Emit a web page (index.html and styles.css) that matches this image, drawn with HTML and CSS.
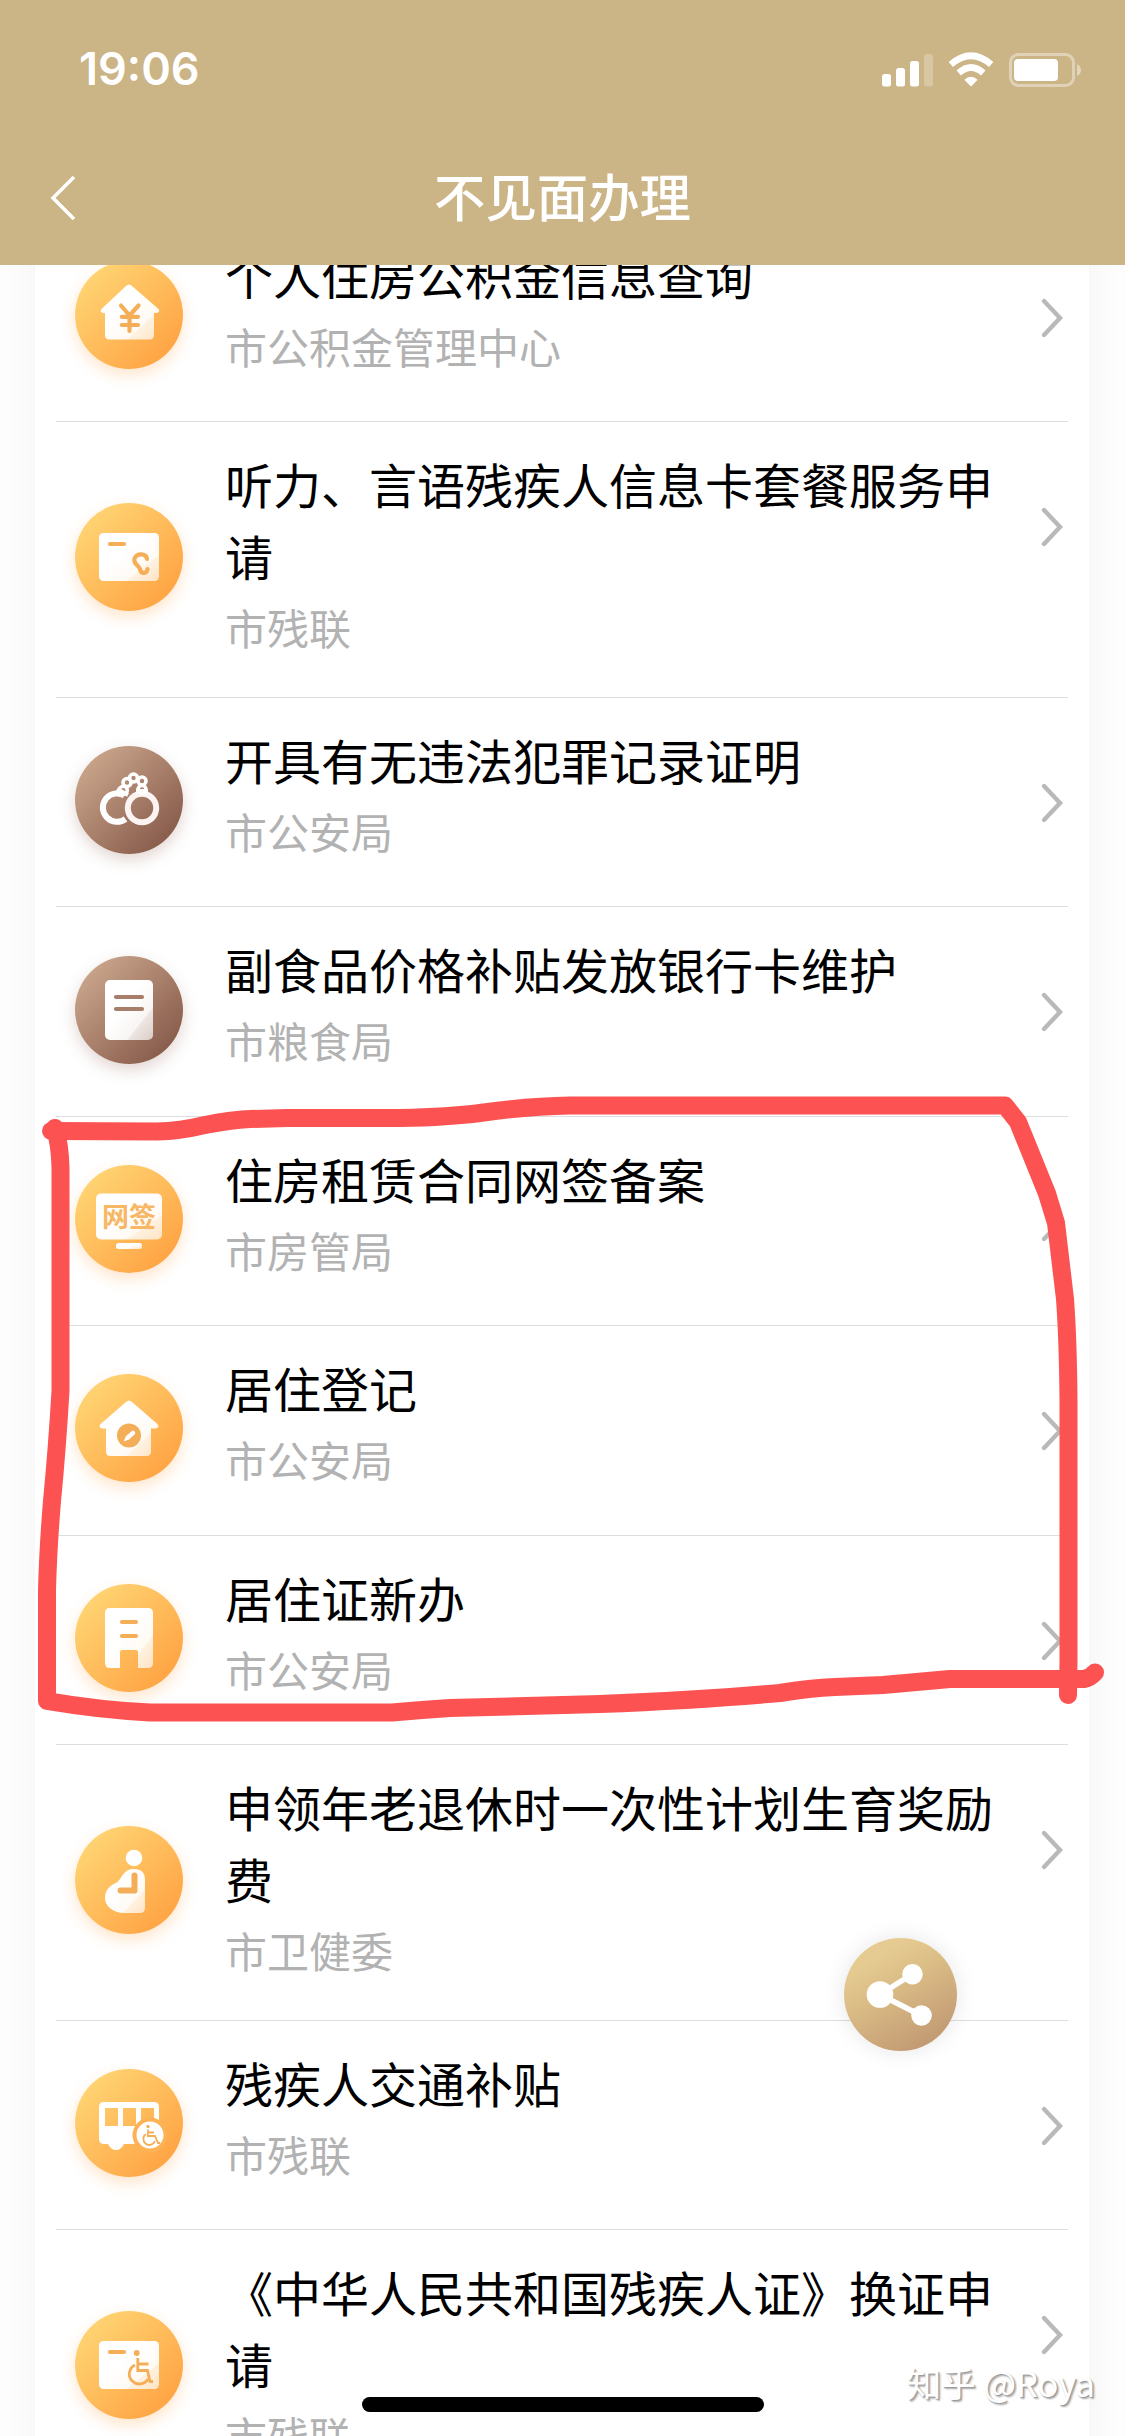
FILE: index.html
```html
<!DOCTYPE html>
<html lang="zh-CN">
<head>
<meta charset="utf-8">
<title>不见面办理</title>
<link rel="stylesheet" href="styles.css">
</head>
<body>
<svg class="defs" width="0" height="0">
  <defs>
    <linearGradient id="sheen" x1="0" y1="0" x2="1" y2="1">
      <stop offset="0.4" stop-color="#fff"/>
      <stop offset="0.72" stop-color="#fff" stop-opacity="0.93"/>
      <stop offset="0.74" stop-color="#fff" stop-opacity="0.82"/>
      <stop offset="1" stop-color="#fff" stop-opacity="0.66"/>
    </linearGradient>
    <symbol id="arrow" viewBox="0 0 24 42">
      <path d="M4 4 L20 21 L4 38" fill="none" stroke="#b9b9b9" stroke-width="4.4" stroke-linecap="round" stroke-linejoin="miter"/>
    </symbol>
  </defs>
</svg>
<div class="screen">
  <header class="header">
    <div class="status">
      <span class="clock">19:06</span>
      <svg class="indicators" width="204" height="40" viewBox="0 0 204 40">
        <g fill="#fff">
          <rect x="4" y="25" width="9" height="12.500" rx="2.500"/>
          <rect x="18" y="19" width="9" height="18.500" rx="2.500"/>
          <rect x="32" y="12" width="9" height="25.500" rx="2.500"/>
          <rect x="46" y="5" width="9" height="32.500" rx="2.500" opacity="0.25"/>
          <path d="M93 37.500 L86.300 30.700 Q93 24.700 99.700 30.700 Z"/>
        </g>
        <g fill="none" stroke="#fff" stroke-width="6.500">
          <path d="M72.800 15.500 Q93 -2 113.200 15.500"/>
          <path d="M80.700 24 Q93 13 105.300 24"/>
        </g>
        <rect x="132.500" y="5.500" width="63" height="31" rx="8" fill="none" stroke="#fff" stroke-width="3" opacity="0.4"/>
        <rect x="136" y="10" width="44" height="22" rx="4" fill="#fff"/>
        <path d="M199 15 Q203 17 203 21 T199 27 Z" fill="#fff" opacity="0.45"/>
      </svg>
    </div>
    <div class="navbar">
      <svg class="back" width="28" height="48" viewBox="0 0 28 48">
        <path d="M26 3 L5 24 L26 45" fill="none" stroke="#fff" stroke-width="3.600"/>
      </svg>
      <h1 class="heading">不见面办理</h1>
    </div>
  </header>

  <main class="viewport">
    <ul class="list">
      <li class="row">
        <svg class="icon gold" viewBox="0 0 108 108">
          <path d="M54 23.500 Q55.500 23.500 57 25 L83 47.500 Q86 51 82 52 H79 V74 Q79 78.500 74.500 78.500 H34.500 Q30 78.500 30 74 V52 H28 Q24 51 27 47.500 L51 25 Q52.500 23.500 54 23.500Z" fill="url(#sheen)"/>
          <path d="M46 44.500 L54.500 54.500 L63.500 44.500 M54.500 54 V70 M46.800 55.800 H63 M46.800 64 H63" class="line"/>
        </svg>
        <div class="body"><h2 class="title">个人住房公积金信息查询</h2><p class="dept">市公积金管理中心</p></div>
        <svg class="arrow"><use href="#arrow"/></svg>
      </li>
      <li class="row tall">
        <svg class="icon gold" viewBox="0 0 108 108">
          <rect x="24" y="30" width="60" height="48" rx="4.500" fill="url(#sheen)"/>
          <path d="M35 41 H49 M72 56 C71 50 62 50 59.500 55.500 C58 61 64 62.500 65 66 C66 71.500 72.500 71 72.500 66" class="line"/>
        </svg>
        <div class="body"><h2 class="title">听力、言语残疾人信息卡套餐服务申请</h2><p class="dept">市残联</p></div>
        <svg class="arrow"><use href="#arrow"/></svg>
      </li>
      <li class="row">
        <svg class="icon brown" viewBox="0 0 108 108">
          <g fill="none" stroke="#fff">
            <path d="M49.500 49.500 A14.200 14.200 0 1 0 50.500 73" stroke-width="6"/>
            <path d="M42 43 L53 49" stroke-width="4"/>
            <path d="M61 46 H73" stroke-width="6"/>
            <circle cx="67" cy="62" r="14.200" stroke-width="6" stroke="#fbf4f2"/>
            <g stroke-width="3.600">
              <circle cx="48.300" cy="44.300" r="4"/><circle cx="52" cy="36.500" r="4"/><circle cx="58.500" cy="32" r="4"/><circle cx="67" cy="35" r="4"/><circle cx="67" cy="43.500" r="4"/>
            </g>
          </g>
        </svg>
        <div class="body"><h2 class="title">开具有无违法犯罪记录证明</h2><p class="dept">市公安局</p></div>
        <svg class="arrow"><use href="#arrow"/></svg>
      </li>
      <li class="row">
        <svg class="icon brown" viewBox="0 0 108 108">
          <rect x="30" y="24" width="48" height="60" rx="5" fill="url(#sheen)"/>
          <path d="M41 41 H67 M41 53 H67" class="line"/>
        </svg>
        <div class="body"><h2 class="title">副食品价格补贴发放银行卡维护</h2><p class="dept">市粮食局</p></div>
        <svg class="arrow"><use href="#arrow"/></svg>
      </li>
      <li class="row">
        <svg class="icon gold" viewBox="0 0 108 108">
          <rect x="21" y="28.500" width="66" height="46" rx="5" fill="url(#sheen)"/>
          <rect x="41" y="78" width="26" height="6" rx="2.500" fill="url(#sheen)"/>
          <text x="54" y="61.500" class="glyph">网签</text>
        </svg>
        <div class="body"><h2 class="title">住房租赁合同网签备案</h2><p class="dept">市房管局</p></div>
        <svg class="arrow"><use href="#arrow"/></svg>
      </li>
      <li class="row">
        <svg class="icon gold" viewBox="0 0 108 108">
          <path d="M54 26.500 Q55.500 26.500 57 28 L82.500 50 Q85 53.500 81 54.500 H76 V77.500 Q76 82 71.500 82 H35.500 Q31 82 31 77.500 V54.500 H27 Q23 53.500 25.500 50 L51 28 Q52.500 26.500 54 26.500Z" fill="url(#sheen)"/>
          <circle cx="54" cy="61.500" r="12" fill="#f5ae58"/>
          <path d="M48.500 67.500 L51 62 L57.500 56.500 Q61 57 60 60 L54 65.500 Z" fill="#fff"/>
        </svg>
        <div class="body"><h2 class="title">居住登记</h2><p class="dept">市公安局</p></div>
        <svg class="arrow"><use href="#arrow"/></svg>
      </li>
      <li class="row">
        <svg class="icon gold" viewBox="0 0 108 108">
          <path d="M35 24 H73 Q78 24 78 29 V79 Q78 84 73 84 H63 V68 Q63 66 61 66 H47 Q45 66 45 68 V84 H35 Q30 84 30 79 V29 Q30 24 35 24Z" fill="url(#sheen)"/>
          <path d="M47 38 H61 M47 52 H61" class="line"/>
        </svg>
        <div class="body"><h2 class="title">居住证新办</h2><p class="dept">市公安局</p></div>
        <svg class="arrow"><use href="#arrow"/></svg>
      </li>
      <li class="row tall">
        <svg class="icon gold" viewBox="0 0 108 108">
          <circle cx="59" cy="32" r="8.300" fill="#fff"/>
          <path d="M59 43 Q70 43 70 54 V82 Q70 87 65 87 H49 C38 87 30 80 30 72 C30 63 36 59 41 57 C47 54 47 43 59 43Z" fill="url(#sheen)"/>
          <path d="M59.500 49.500 V64.500 H45.500" class="line arm"/>
        </svg>
        <div class="body"><h2 class="title">申领年老退休时一次性计划生育奖励费</h2><p class="dept">市卫健委</p></div>
        <svg class="arrow"><use href="#arrow"/></svg>
      </li>
      <li class="row">
        <svg class="icon gold" viewBox="0 0 108 108">
          <path fill-rule="evenodd" d="M29 33 H79 Q84 33 84 38 V58 H60 V75 H49 Q46 81 41 81 T33 75 H29 Q24 75 24 70 V38 Q24 33 29 33Z M30 39 V57 H43 V39Z M48 39 V57 H61 V39Z M66 39 V57 H79 V39Z" fill="#fff"/>
          <circle cx="75" cy="66" r="15.500" fill="#fff" stroke="#fdb255" stroke-width="4"/>
          <circle cx="73" cy="57.500" r="1.700" fill="#f5ae58"/>
          <path d="M73 60.500 V67 H80 L83 74 H85 M74 63.500 H79 M71 65 A6 6 0 1 0 80 72" fill="none" stroke="#f5ae58" stroke-width="1.800"/>
        </svg>
        <div class="body"><h2 class="title">残疾人交通补贴</h2><p class="dept">市残联</p></div>
        <svg class="arrow"><use href="#arrow"/></svg>
      </li>
      <li class="row tall">
        <svg class="icon gold" viewBox="0 0 108 108">
          <rect x="24" y="30" width="60" height="48" rx="4.500" fill="url(#sheen)"/>
          <path d="M35 41 H49" class="line"/>
          <circle cx="61.700" cy="42" r="2.900" fill="#f5ae58"/>
          <path d="M62.800 47 V59.500 H72.500 L75 70.500 H78 M63 53 H73.500 M60 54 A10 10 0 1 0 73 68" fill="none" stroke="#f5ae58" stroke-width="2.800"/>
        </svg>
        <div class="body"><h2 class="title">《中华人民共和国残疾人证》换证申请</h2><p class="dept">市残联</p></div>
        <svg class="arrow"><use href="#arrow"/></svg>
      </li>
    </ul>
  </main>

  <svg class="share" width="113" height="113" viewBox="0 0 113 113">
    <path d="M36 56.500 L68.500 36 M36 56.500 L77 77.500" stroke="#fff" stroke-width="5.500"/>
    <g fill="#fff"><circle cx="36" cy="56.500" r="13.300"/><circle cx="68.500" cy="36.200" r="10.300"/><circle cx="77.500" cy="77.500" r="10.300"/></g>
  </svg>

  <svg class="marker" width="1125" height="2436" viewBox="0 0 1125 2436">
    <g fill="none" stroke="#fc5252" stroke-width="18" stroke-linecap="round" stroke-linejoin="round">
      <path d="M51 1131 L157 1131.500 Q180 1131 205 1125 Q230 1120 250 1119 L287 1118 H400 Q450 1117 480 1113 Q530 1106 570 1105.500 H1005 L1018 1122 L1047 1193.500 L1056 1223 L1065 1299 Q1068 1340 1068.500 1400 V1661 L1068 1695"/>
      <path d="M55 1128 Q60 1145 60.500 1168 V1391 Q57 1450 52 1501 Q48 1550 47 1590 V1701 Q100 1710 150 1712.500 H392 Q420 1710 450 1708 L600 1704 Q700 1700 780 1693 Q810 1688 835 1687 L883 1685 L950 1679 H1084 Q1090 1678 1095 1672.500"/>
    </g>
  </svg>
  <div class="watermark">知乎 @Roya</div>
  <div class="home-bar"></div>
</div>
</body>
</html>
```
FILE: styles.css
```css
* { box-sizing: border-box; margin: 0; padding: 0; }
body {
  width: 1125px;
  font-family: "Noto Sans CJK SC", "Noto Sans", sans-serif;
  background: #fdfdfd;
}
.defs { position: absolute; }
.screen {
  position: relative;
  display: flex;
  flex-direction: column;
  width: 1125px;
  height: 2436px;
  overflow: hidden;
}
.header {
  flex: none;
  height: 265px;
  background: #cbb485;
  color: #fff;
}
.status {
  display: flex;
  justify-content: space-between;
  align-items: center;
  height: 132px;
  padding: 5px 43px 0 79px;
}
.clock {
  font: 600 45px/1 Inter, "Liberation Sans", sans-serif;
}
.navbar {
  display: flex;
  align-items: center;
  height: 132px;
  padding: 0 48px;
}
.back { flex: none; }
.heading {
  flex: 1;
  margin: -6px 28px 0 0;
  font-size: 51.4px;
  line-height: 76px;
  font-weight: 500;
  text-align: center;
}
.viewport {
  flex: 1;
  min-height: 0;
  overflow: hidden;
  padding: 0 36px 0 35px;
}
.list {
  margin-top: -52.4px;
  padding: 0 21px;
  list-style: none;
  background: #fff;
  box-shadow: 0 0 36px rgba(0, 0, 0, 0.045);
}
.row {
  display: flex;
  align-items: center;
  height: 209.4px;
  padding: 0 4px 0 19px;
  border-bottom: 1px solid #dedede;
}
.row.tall { height: 276.05px; }
.icon {
  flex: none;
  width: 108px;
  height: 108px;
  margin-top: -4px;
  border-radius: 50%;
}
.tall .icon { margin-top: -6px; }
.gold {
  background: linear-gradient(135deg, #ffd473 12%, #ffa141 92%);
  box-shadow: 0 6px 15px rgba(255, 160, 70, 0.28);
}
.brown {
  background: linear-gradient(135deg, #cba78d 10%, #845747 92%);
  box-shadow: 0 6px 15px rgba(140, 90, 75, 0.25);
}
.line {
  fill: none;
  stroke: #f5ae58;
  stroke-width: 4.2;
  stroke-linecap: round;
  stroke-linejoin: round;
}
.brown .line { stroke: #a87d69; }
.line.arm { stroke-width: 6; }
.glyph {
  font-size: 27px;
  font-weight: 700;
  text-anchor: middle;
  fill: #f7b765;
}
.body {
  align-self: flex-start;
  width: 780px;
  margin-left: 42px;
  padding-top: 25px;
}
.title {
  font-size: 48px;
  line-height: 72px;
  font-weight: 400;
  color: #000;
}
.dept {
  margin-top: 4px;
  font-size: 42px;
  line-height: 63px;
  color: #b2b2b2;
}
.arrow {
  align-self: flex-start;
  flex: none;
  width: 24px;
  height: 42px;
  margin: 84px 0 0 auto;
}
.share {
  position: absolute;
  left: 844px;
  top: 1938px;
  border-radius: 50%;
  background: linear-gradient(150deg, #e5cb92 20%, #dbbd86 42%, #bd9370 95%);
  box-shadow: 0 0 22px rgba(0, 0, 0, 0.1);
}
.marker { position: absolute; left: 0; top: 0; }
.watermark {
  position: absolute;
  right: 30px;
  bottom: 32px;
  font: 400 34.5px/44px "Noto Sans CJK SC", sans-serif;
  color: #fff;
  text-shadow: 1px 1px 1px #999, 2px 2px 2px #aaa;
  white-space: nowrap;
}
.home-bar {
  position: absolute;
  left: 362px;
  bottom: 24px;
  width: 402px;
  height: 15px;
  border-radius: 8px;
  background: #000;
}
```
